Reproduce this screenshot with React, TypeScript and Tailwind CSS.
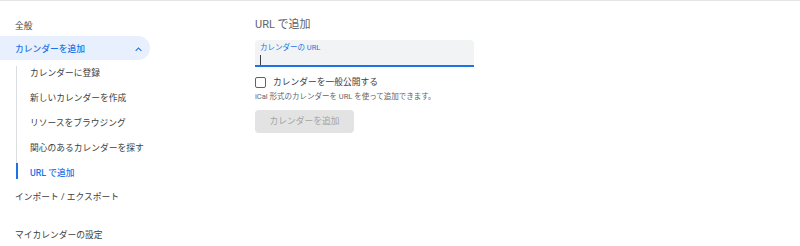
import React from "react";

const subItems = [
  "カレンダーに登録",
  "新しいカレンダーを作成",
  "リソースをブラウジング",
  "関心のあるカレンダーを探す",
];

function ChevronUp() {
  return (
    <svg viewBox="0 0 24 24" className="h-[13px] w-[13px] fill-[#1a73e8]">
      <path d="M12 8l-6 6 1.41 1.41L12 10.83l4.59 4.58L18 14z" />
    </svg>
  );
}

export default function App() {
  return (
    <div
      className="flex h-[246px] w-[800px] overflow-hidden border-t border-[#e3e4e6] bg-white text-[#3c4043]"
      style={{ fontFamily: "Roboto, 'Noto Sans CJK JP', sans-serif" }}
    >
      <nav className="flex w-[150px] shrink-0 flex-col pt-[12px] text-[8.75px]">
        <div className="flex h-[25px] items-center pl-[15px] pt-[3px]">全般</div>
        <div className="flex h-[25px] items-center justify-between rounded-r-full bg-[#e8f0fe] pl-[15px] pr-[5px] pt-[3px] font-medium text-[#1a73e8]">
          <span>カレンダーを追加</span>
          <ChevronUp />
        </div>
        <div className="flex">
          <div className="ml-[16px] flex w-[2px] flex-col py-[6px]">
            <div className="w-[1px] grow bg-[#dadce0]" />
            <div className="h-[16px] w-[2px] bg-[#1a73e8]" />
          </div>
          <ul className="flex flex-col pl-[12px]">
            {subItems.map((t) => (
              <li key={t} className="flex h-[25px] items-center pt-[3px]">
                {t}
              </li>
            ))}
            <li className="flex h-[25px] items-center pt-[3px] font-medium text-[#1a73e8]">URL で追加</li>
          </ul>
        </div>
        <div className="flex h-[25px] items-center pl-[15px] pt-[3px]">インポート / エクスポート</div>
        <div className="mt-[15px] flex h-[25px] items-center pl-[15px] pt-[3px]">マイカレンダーの設定</div>
      </nav>

      <main className="ml-[105px] flex flex-col pt-[11px]">
        <h1 className="flex h-[25px] items-center pt-[2px] text-[11px] text-[#5f6368]">URL で追加</h1>
        <label className="mt-[3px] flex h-[27px] w-[219px] flex-col rounded-t-[4px] border-b-2 border-[#1a73e8] bg-[#f1f3f4] px-[5px] pt-[3px]">
          <span className="text-[7.5px] leading-[10px] text-[#1a73e8]">カレンダーの URL</span>
          <span className="mt-[2px] h-[10px] w-[1px] bg-[#3c4043]" />
        </label>
        <div className="mt-[9px] flex items-center gap-[7px]">
          <span className="h-[11px] w-[11px] rounded-[2px] border-[1.5px] border-[#5f6368]" />
          <span className="text-[8.75px] leading-[12px]">カレンダーを一般公開する</span>
        </div>
        <p className="mt-[3px] text-[7.5px] leading-[12px] text-[#5f6368]">
          iCal 形式のカレンダーを URL を使って追加できます。
        </p>
        <button
          disabled
          className="mt-[7px] flex h-[23px] w-[99px] items-center justify-center rounded-[4px] bg-[#e3e3e3] text-[8.75px] text-[#a3a3a3]"
        >
          カレンダーを追加
        </button>
      </main>
    </div>
  );
}
